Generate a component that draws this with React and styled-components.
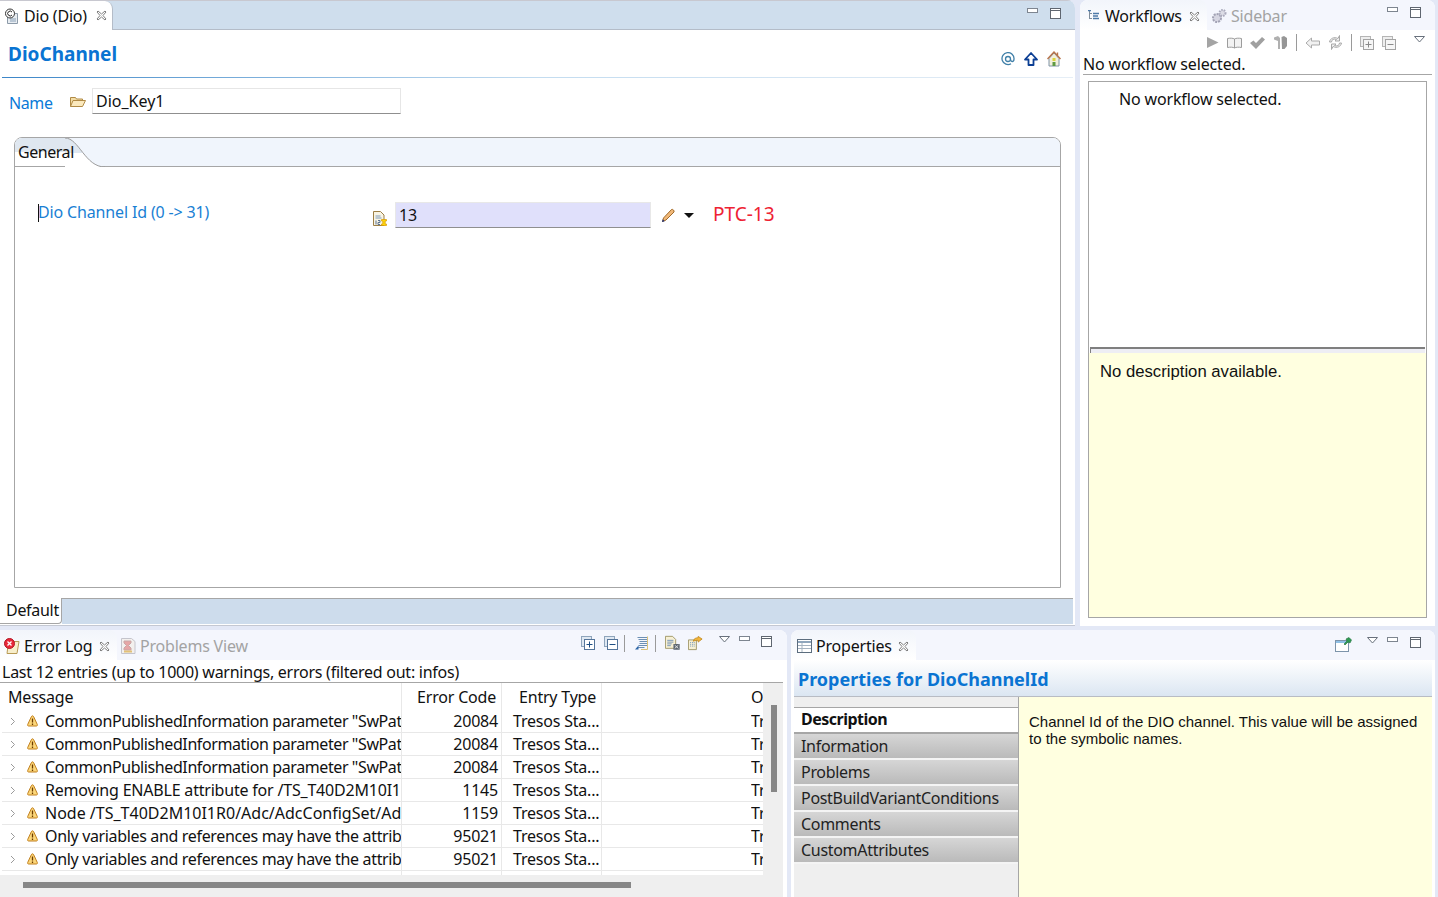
import styled, { createGlobalStyle } from 'styled-components';

const UI_FONT = '"Noto Sans", "Noto Sans CJK SC", sans-serif';

const GlobalStyle = createGlobalStyle`
  html, body {
    margin: 0;
    padding: 0;
    width: 1438px;
    height: 897px;
    overflow: hidden;
    background: #e3e8f6;
    font-family: ${UI_FONT};
    font-size: 16px;
    letter-spacing: -0.2px;
    color: #111;
  }
  * { box-sizing: border-box; }
`;

const rows = [
  { message: 'CommonPublishedInformation parameter "SwPat', code: '20084', tracking: -0.4 },
  { message: 'CommonPublishedInformation parameter "SwPat', code: '20084', tracking: -0.4 },
  { message: 'CommonPublishedInformation parameter "SwPat', code: '20084', tracking: -0.4 },
  { message: 'Removing ENABLE attribute for /TS_T40D2M10I1', code: '1145', tracking: -0.2 },
  { message: 'Node /TS_T40D2M10I1R0/Adc/AdcConfigSet/Ad', code: '1159', tracking: 0 },
  { message: 'Only variables and references may have the attrib', code: '95021', tracking: -0.34 },
  { message: 'Only variables and references may have the attrib', code: '95021', tracking: -0.34 },
];

const sections = ['Information', 'Problems', 'PostBuildVariantConditions', 'Comments', 'CustomAttributes'];

// ---------- icons ----------
const CloseIcon = () => (
  <Glyph width="11" height="11" viewBox="0 0 11 11">
    <path d="M1 2 2 1 5.5 4 9 1 10 2 7 5.5 10 9 9 10 5.5 7 2 10 1 9 4 5.5Z" fill="#fff" stroke="#7f7f7f" />
  </Glyph>
);

const MinIcon = () => (
  <Glyph width="11" height="6" viewBox="0 0 11 6">
    <rect x="0.5" y="0.5" width="10" height="4" fill="#fff" stroke="#7d8590" />
  </Glyph>
);

const MaxIcon = () => (
  <Glyph width="11" height="11" viewBox="0 0 11 11">
    <rect x="0.5" y="0.5" width="10" height="10" fill="#fff" stroke="#5f6670" />
    <path d="M1 2.5h9" stroke="#5f6670" />
  </Glyph>
);

const MenuIcon = () => (
  <Glyph width="11" height="7" viewBox="0 0 11 7">
    <path d="M.5.5h10L5.5 6Z" fill="#fff" stroke="#68707c" />
  </Glyph>
);

const ExpandIcon = ({ minus }) => (
  <Glyph width="14" height="14" viewBox="0 0 14 14">
    <rect x="0.5" y="0.5" width="10" height="10" fill="#dfe8f2" stroke="#8ea4bb" />
    <rect x="3.5" y="3.5" width="10" height="10" fill="#fff" stroke="#54749a" />
    <path d={minus ? 'M5.5 8.5h6' : 'M5.5 8.5h6M8.5 5.5v6'} stroke="#1f4f85" />
  </Glyph>
);

const GrayExpandIcon = ({ minus }) => (
  <Glyph width="14" height="14" viewBox="0 0 14 14">
    <rect x="0.5" y="0.5" width="10" height="10" fill="#eee" stroke="#b5b5b5" />
    <rect x="3.5" y="3.5" width="10" height="10" fill="#f6f6f6" stroke="#a3a3a3" />
    <path d={minus ? 'M5.5 8.5h6' : 'M5.5 8.5h6M8.5 5.5v6'} stroke="#8a8a8a" />
  </Glyph>
);

const EditorTabIcon = () => (
  <Glyph width="16" height="16" viewBox="0 0 16 16">
    <path d="M3.5 5.5h10v10h-10Z" fill="#e8edf2" stroke="#8c9aa8" />
    <path d="M6 11h6M6 13h6" stroke="#8aa0b6" />
    <circle cx="6" cy="5.5" r="4.5" fill="#fff" stroke="#333" />
    <path d="M8 4a2.4 2.4 0 1 0 0 3" fill="none" stroke="#222" />
  </Glyph>
);

const FolderIcon = () => (
  <Glyph width="16" height="13" viewBox="0 0 16 13">
    <path d="M.5 11.5V2.5h5l1 1.5h6v2" fill="#f3dda6" stroke="#b08a45" />
    <path d="M.5 11.5 3 5.5h12.500l-3 6Z" fill="#fbe9bd" stroke="#b08a45" />
  </Glyph>
);

const NumberDocIcon = () => (
  <Glyph width="14" height="15" viewBox="0 0 14 15">
    <path d="M.5.5h7l3.5 3.5v10.500H.5Z" fill="#f8f4e4" stroke="#9c7f46" />
    <path d="M2.5 5h5M2.5 7h6" stroke="#7e9bbb" />
    <path d="M3 9.5v4M5 9.5h2v2H5v2h2" fill="none" stroke="#5b7391" />
    <path d="M8.5 8.5h5v1.500h-1.300v3h1.300v1.500h-5V13h1.300v-3H8.500Z" fill="#ffd60a" stroke="#d89a00" strokeWidth="0.7" />
  </Glyph>
);

const PencilIcon = () => (
  <Glyph width="15" height="15" viewBox="0 0 15 15">
    <path d="M1.5 13.5 2.5 10 10.5 1.5c1-.8 3.2 1.2 2.5 2.5L5 12Z" fill="#f0b878" stroke="#a06a2b" />
    <path d="M1 14 1.8 11.3 3.7 13.2Z" fill="#1b2f7a" />
  </Glyph>
);

const AtIcon = () => (
  <Glyph width="14" height="14" viewBox="0 0 14 14">
    <path d="M10 11.8A6 6 0 1 1 13 7c0 1.5-.7 2.5-1.8 2.5S9.6 8.7 9.6 7.6" fill="none" stroke="#3f7fa8" strokeWidth="1.3" />
    <circle cx="7" cy="7" r="2.5" fill="none" stroke="#3f7fa8" strokeWidth="1.3" />
  </Glyph>
);

const UpIcon = () => (
  <Glyph width="14" height="14" viewBox="0 0 14 14">
    <path d="M7 1 13 7.5H9.5V13h-5V7.5H1Z" fill="#fff" stroke="#0c3f94" strokeWidth="1.8" strokeLinejoin="round" />
  </Glyph>
);

const HomeIcon = () => (
  <Glyph width="14" height="16" viewBox="0 0 14 16">
    <path d="M2 7.5 7 2l5 5.5V15H2Z" fill="#f2efdc" stroke="#8094a8" />
    <path d="M.5 8 7 1l6.5 7M10.5 1.5v3" fill="none" stroke="#b8744a" strokeWidth="1.4" />
    <rect x="5.5" y="7" width="3" height="3" fill="#dcd43c" />
    <rect x="5.5" y="11" width="3" height="4" fill="#5f9a42" />
  </Glyph>
);

const TreeIcon = () => (
  <Glyph width="12" height="12" viewBox="0 0 12 12">
    <path d="M1.5 1v8M1.5 3.5H4M1.5 8.5H4" stroke="#7e8d9c" />
    <path d="M0 .5h3M5 3.5h6M5 6h5M5 8.5h6" stroke="#4d7aa8" strokeWidth="1.5" />
  </Glyph>
);

const GearsIcon = () => (
  <Glyph width="16" height="15" viewBox="0 0 16 15">
    <circle cx="6" cy="9" r="4" fill="#d6d6e2" stroke="#a2a2b4" strokeWidth="2" strokeDasharray="2 1" />
    <circle cx="11.5" cy="4" r="3" fill="#dcdce6" stroke="#aaaabc" strokeWidth="2" strokeDasharray="1.5 1" />
  </Glyph>
);

const PlayIcon = () => (
  <Glyph width="13" height="13" viewBox="0 0 13 13">
    <path d="M1 1 12.5 6.5 1 12Z" fill="#a4a4a4" />
  </Glyph>
);

const BookIcon = () => (
  <Glyph width="15" height="12" viewBox="0 0 15 12">
    <path d="M7.5 2C6 1 3 1 .5 1.5v9C3 10 6 10 7.5 11c1.500-1 4.500-1 7-.5v-9C12 1 9 1 7.5 2ZM7.5 2v9" fill="#f2f2f2" stroke="#9c9c9c" />
  </Glyph>
);

const CheckIcon = () => (
  <Glyph width="15" height="12" viewBox="0 0 15 12">
    <path d="M0 6 3.5 3.5 6 6 12 0 15 2.5 6 12Z" fill="#a0a0a0" />
  </Glyph>
);

const ShirtIcon = () => (
  <Glyph width="15" height="15" viewBox="0 0 15 15">
    <path d="M1 2.5 5 1 7 3V14H5V6L1 4.5Z" fill="#b0b0b0" />
    <path d="M8.5 2 11 1l3 2v8l-2.5 3H9Z" fill="#969696" />
  </Glyph>
);

const BackIcon = () => (
  <Glyph width="15" height="12" viewBox="0 0 15 12">
    <path d="M6.5 1 1 6l5.5 5V8h8V4h-8Z" fill="#f1f1f1" stroke="#ababab" />
  </Glyph>
);

const SyncIcon = () => (
  <Glyph width="15" height="15" viewBox="0 0 15 15">
    <path d="M1.5 7C2 3.5 6 1.5 10 3.5L11.5.5V6H7l1.5-1.5C6 3.5 3.5 4.5 3.5 7ZM13.5 8c-.5 3.5-4.500 5.500-8.500 3.500L3.5 14.500V9H8L6.500 10.500c2.500 1 5 0 5-2.500Z" fill="#f2f2f2" stroke="#a8a8a8" />
  </Glyph>
);

const ErrorLogIcon = () => (
  <Glyph width="16" height="16" viewBox="0 0 16 16">
    <path d="M4.5 3.5h10.500l-2 12H3Z" fill="#f7eecb" stroke="#b89a55" />
    <circle cx="5.5" cy="5.5" r="5" fill="#e8283a" stroke="#b21724" />
    <path d="M3.5 3.5l4 4M7.5 3.5l-4 4" stroke="#fff" strokeWidth="1.3" />
  </Glyph>
);

const ProblemsIcon = () => (
  <Glyph width="15" height="16" viewBox="0 0 15 16">
    <path d="M.5.5h10l3.500 3v12H.5Z" fill="#f3f0ee" stroke="#c4c4cc" />
    <path d="M3 3h7v2l-2.500 2.500L10 10v2H3v-2l2.500-2.500L3 5Z" fill="#e6a6a6" stroke="#c9a6a6" />
    <path d="M3 13.5h8" stroke="#e2c178" strokeWidth="2" />
  </Glyph>
);

const ActivateIcon = () => (
  <Glyph width="15" height="15" viewBox="0 0 15 15">
    <path d="M3.5 1.5h10M4.5 3.5h9M5.5 5.5h8M5.5 7.5h8M4.5 9.5h9M3.5 11.5h7" stroke="#6c8fb4" />
    <path d="M1 13.5 4.5 9.5V13.5Z" fill="#2d66a8" />
    <path d="M13.5 .5v13H7" fill="none" stroke="#d9c077" />
  </Glyph>
);

const ClearLogIcon = () => (
  <Glyph width="16" height="16" viewBox="0 0 18 16">
    <path d="M.5.5h8l3.500 3.500v10H.5Z" fill="#f7f0d4" stroke="#9a9160" />
    <path d="M2.5 5h7M2.5 7h7M2.5 9h5M2.5 11h4" stroke="#6d8eb4" />
    <path d="M9.5 9h7v6.500h-7Z" fill="#5c6670" />
    <path d="M11 10.5l4 3.500M15 10.5l-4 3.500" stroke="#e8e8e8" />
  </Glyph>
);

const ExportLogIcon = () => (
  <Glyph width="15" height="16" viewBox="0 0 17 16">
    <path d="M.5 4.5h9v11h-9Z" fill="#f7f0d4" stroke="#9a9160" />
    <path d="M2.5 7.5h5M2.5 9.5h5M2.5 11.5h5" stroke="#5d86b4" strokeDasharray="1 1" />
    <path d="M6 6c.5-3 3-4 5.500-4V.5L16 3.500 11.500 7V5C9 5 7.500 5.200 6 6Z" fill="#f4b63a" stroke="#b97d10" strokeWidth="0.8" />
  </Glyph>
);

const WarnIcon = () => (
  <Glyph width="11" height="12" viewBox="0 0 11 12">
    <path d="M5.5 .8C6 .8 6.4 1.2 6.7 1.8L10.3 9.5C10.7 10.4 10.2 11 9.3 11H1.7C.8 11 .3 10.4.7 9.5L4.3 1.8C4.6 1.2 5 .8 5.5 .8Z" fill="#fcd77a" stroke="#c07f1e" />
    <path d="M5.5 3.5v4M5.5 8.5v1.500" stroke="#6b3b00" strokeWidth="1.3" />
  </Glyph>
);

const ChevronIcon = () => (
  <Glyph width="6" height="9" viewBox="0 0 6 9">
    <path d="M1 1l3.500 3.500L1 8" fill="none" stroke="#9a9a9a" />
  </Glyph>
);

const TableIcon = () => (
  <Glyph width="15" height="14" viewBox="0 0 15 14">
    <rect x="0.5" y="0.5" width="14" height="13" fill="#fff" stroke="#5c6d7e" />
    <path d="M1 3h13" stroke="#8fa6bc" strokeWidth="2" />
    <path d="M5 4v9M1 6.5h13M1 9.5h13" stroke="#a5b3c1" />
  </Glyph>
);

const PinIcon = () => (
  <Glyph width="17" height="15" viewBox="0 0 17 15">
    <rect x="0.5" y="3.5" width="13" height="11" fill="#fff" stroke="#7d94aa" />
    <path d="M1 5h12" stroke="#8fc0e6" strokeWidth="2" />
    <path d="M9 7 12 4l-1-2 3-1.500 2.500 2.500L15 6l-2-1-3 3Z" fill="#2f9b54" stroke="#1e6e3a" strokeWidth="0.6" />
  </Glyph>
);

// ---------- page ----------
const App = () => (
  <Page>
    <GlobalStyle />
    <TopRow>
      <EditorPanel>
        <EditorTabBar>
          <EditorTab>
            <EditorTabIcon />
            <TabTitle>Dio (Dio)</TabTitle>
            <CloseIcon />
          </EditorTab>
          <WindowButtons>
            <MinIcon />
            <MaxIcon />
          </WindowButtons>
        </EditorTabBar>
        <FormHeader>
          <FormTitle>DioChannel</FormTitle>
          <HeaderTools>
            <AtIcon />
            <UpIcon />
            <HomeIcon />
          </HeaderTools>
        </FormHeader>
        <NameRow>
          <NameLabel>Name</NameLabel>
          <FolderIcon />
          <NameField>Dio_Key1</NameField>
        </NameRow>
        <Folder>
          <FolderHead>
            <FolderTab>
              <TabCurve width="40" height="29" viewBox="0 0 40 29">
                <defs>
                  <linearGradient id="tabFill" x1="0" y1="0" x2="0" y2="1">
                    <stop offset="0.5" stopColor="#dfe7f0" />
                    <stop offset="0.5" stopColor="#fff" />
                  </linearGradient>
                </defs>
                <path d="M0 0C14 0 20 29 40 29H0Z" fill="url(#tabFill)" />
                <path d="M0 0C14 0 20 29 40 29" fill="none" stroke="#9c9c9c" />
              </TabCurve>
              <TabLabel>General</TabLabel>
            </FolderTab>
          </FolderHead>
          <FieldRow>
            <FieldLabel>
              <Caret />
              Dio Channel Id (0 -&gt; 31)
            </FieldLabel>
            <DocIconSlot>
              <NumberDocIcon />
            </DocIconSlot>
            <ValueField>13</ValueField>
            <PencilIcon />
            <DropArrow />
            <RedNote>PTC-13</RedNote>
          </FieldRow>
        </Folder>
        <BottomTabs>
          <DefaultTab>Default</DefaultTab>
          <BottomTabFill />
        </BottomTabs>
      </EditorPanel>

      <SidePanel>
        <ViewTabBar>
          <ViewTab $width={127} $left={8} $gap={5}>
            <TreeIcon />
            <TabTitle>Workflows</TabTitle>
            <CloseIcon />
          </ViewTab>
          <GrayTab>
            <GearsIcon />
            Sidebar
          </GrayTab>
          <WindowButtons>
            <MinIcon />
            <MaxIcon />
          </WindowButtons>
        </ViewTabBar>
        <WorkflowTools>
          <PlayIcon />
          <BookIcon />
          <CheckIcon />
          <ShirtIcon />
          <ToolSeparator />
          <BackIcon />
          <SyncIcon />
          <ToolSeparator />
          <GrayExpandIcon />
          <GrayExpandIcon minus />
          <ToolMenu>
            <MenuIcon />
          </ToolMenu>
        </WorkflowTools>
        <WorkflowStatus>No workflow selected.</WorkflowStatus>
        <WorkflowBox>
          <WorkflowList>No workflow selected.</WorkflowList>
          <Sash />
          <WorkflowHelp>No description available.</WorkflowHelp>
        </WorkflowBox>
      </SidePanel>
    </TopRow>

    <BottomRow>
      <LogPanel>
        <ViewTabBar>
          <ViewTab $width={117} $left={4} $gap={4}>
            <ErrorLogIcon />
            <TabTitle>Error Log</TabTitle>
            <CloseIcon />
          </ViewTab>
          <GrayTab>
            <ProblemsIcon />
            Problems View
          </GrayTab>
          <LogTools>
            <ExpandIcon />
            <ExpandIcon minus />
            <LogSeparator />
            <ActivateIcon />
            <LogSeparator />
            <IconPair>
              <ClearLogIcon />
              <ExportLogIcon />
            </IconPair>
            <LogWindowButtons>
              <MenuIcon />
              <MinIcon />
              <MaxIcon />
            </LogWindowButtons>
          </LogTools>
        </ViewTabBar>
        <LogStatus>Last 12 entries (up to 1000) warnings, errors (filtered out: infos)</LogStatus>
        <TableArea>
          <TableClip>
            <TableHead>
              <MessageCell>Message</MessageCell>
              <CodeHeadCell>Error Code</CodeHeadCell>
              <TypeHeadCell>Entry Type</TypeHeadCell>
              <GapCell />
              <OriginCell>O</OriginCell>
            </TableHead>
            {rows.map((row, index) => (
              <TableRow key={index}>
                <MessageCell>
                  <RowLead>
                    <ChevronIcon />
                    <WarnIcon />
                  </RowLead>
                  <MessageText $tracking={row.tracking}>{row.message}</MessageText>
                </MessageCell>
                <CodeCell>{row.code}</CodeCell>
                <TypeCell>Tresos Sta...</TypeCell>
                <GapCell />
                <OriginCell>Tr</OriginCell>
              </TableRow>
            ))}
            <LastRow>
              <MessageCell />
              <CodeCell />
              <TypeCell />
            </LastRow>
          </TableClip>
          <VerticalTrack>
            <VerticalThumb />
          </VerticalTrack>
        </TableArea>
        <HorizontalTrack>
          <HorizontalThumb />
        </HorizontalTrack>
      </LogPanel>

      <PropertiesPanel>
        <ViewTabBar>
          <ViewTab $width={125} $left={6} $gap={4}>
            <TableIcon />
            <TabTitle>Properties</TabTitle>
            <CloseIcon />
          </ViewTab>
          <PropsTools>
            <PinIcon />
            <PropsWindowButtons>
              <MenuIcon />
              <MinIcon />
              <MaxIcon />
            </PropsWindowButtons>
          </PropsTools>
        </ViewTabBar>
        <PropsHeader>Properties for DioChannelId</PropsHeader>
        <PropsBody>
          <SectionList>
            <SectionStrip />
            <ActiveSection>Description</ActiveSection>
            {sections.map((name) => (
              <Section key={name}>{name}</Section>
            ))}
          </SectionList>
          <Description>
            Channel Id of the DIO channel. This value will be assigned to the symbolic names.
          </Description>
        </PropsBody>
      </PropertiesPanel>
    </BottomRow>
  </Page>
);

export default App;

// ---------- styles ----------
const Glyph = styled.svg`
  flex: none;
  display: block;
`;

const Page = styled.div`
  width: 1438px;
  height: 897px;
  display: flex;
  flex-direction: column;
  gap: 4px;
  overflow: hidden;
`;

const TopRow = styled.div`
  display: flex;
  gap: 5px;
  height: 626px;
  padding-right: 3px;
`;

const BottomRow = styled.div`
  display: flex;
  gap: 4px;
  height: 267px;
  padding-right: 3px;
`;

const EditorPanel = styled.section`
  width: 1075px;
  display: flex;
  flex-direction: column;
  background: #fff;
  border-radius: 0 8px 0 0;
  border-bottom: 1px solid #c4c8d2;
  overflow: hidden;
`;

const EditorTabBar = styled.div`
  height: 30px;
  display: flex;
  align-items: stretch;
  background: #cfdeed;
  border-top: 1px solid #c8c8d0;
  border-bottom: 1px solid #b4bcc8;
`;

const EditorTab = styled.div`
  width: 113px;
  margin-bottom: -1px;
  display: flex;
  align-items: center;
  padding: 0 5px 0 4px;
  gap: 4px;
  background: #fff;
  border-right: 1px solid #b4bcc8;
  border-radius: 0 8px 0 0;
`;

const TabTitle = styled.span`
  flex: 1;
  white-space: nowrap;
  line-height: 22px;
`;

const WindowButtons = styled.div`
  margin-left: auto;
  display: flex;
  align-items: flex-start;
  gap: 12px;
  padding: 7px 14px 0 0;
`;

const FormHeader = styled.header`
  height: 48px;
  margin: 0 2px;
  padding: 0 6px;
  display: flex;
  align-items: center;
  justify-content: space-between;
  border-bottom: 1px solid transparent;
  border-image: linear-gradient(90deg, #3c86c8, #c3dcf0 50%, #e6eef6) 1;
`;

const FormTitle = styled.h1`
  margin: 0;
  font-size: 19px;
  line-height: 28px;
  font-weight: 700;
  letter-spacing: 0;
  color: #0a74d2;
`;

const HeaderTools = styled.div`
  display: flex;
  align-items: center;
  gap: 9px;
  padding: 10px 0 0;
  margin-right: 6px;
`;

const NameRow = styled.div`
  height: 26px;
  margin-top: 10px;
  padding-left: 8px;
  display: flex;
  align-items: center;
`;

const NameLabel = styled.span`
  width: 62px;
  color: #0a7ad8;
  padding: 3px 0 0 1px;
  letter-spacing: -0.4px;
`;

const NameField = styled.div`
  width: 309px;
  height: 26px;
  margin-left: 6px;
  padding: 0 3px;
  line-height: 25px;
  letter-spacing: 0;
  border: 1px solid #e6e6e6;
  border-bottom: 1px solid #8f8f8f;
`;

const Folder = styled.div`
  width: 1047px;
  height: 451px;
  margin: 23px 0 0 14px;
  border: 1px solid #a6a6a6;
  border-radius: 8px 8px 0 0;
  overflow: hidden;
  flex: none;
`;

const FolderHead = styled.div`
  height: 29px;
  background: #f0f5fc;
  border-bottom: 1px solid #a6a6a6;
`;

const FolderTab = styled.div`
  position: relative;
  width: 50px;
  height: 28px;
  padding-left: 3px;
  line-height: 28px;
  white-space: nowrap;
  background: linear-gradient(#dfe7f0 50%, #fff 50%);
`;

const TabLabel = styled.span`
  position: relative;
  letter-spacing: -0.45px;
`;

const TabCurve = styled.svg`
  position: absolute;
  left: 50px;
  top: 0;
`;

const FieldRow = styled.div`
  display: flex;
  align-items: center;
  height: 26px;
  margin-top: 35px;
  padding-left: 23px;
`;

const FieldLabel = styled.div`
  position: relative;
  width: 335px;
  color: #1a7fd4;
  letter-spacing: -0.15px;
  margin-top: -6px;
`;

const Caret = styled.span`
  position: absolute;
  left: 0;
  top: 3px;
  width: 1px;
  height: 18px;
  background: #111;
`;

const DocIconSlot = styled.span`
  padding-top: 6px;
`;

const ValueField = styled.div`
  width: 256px;
  height: 26px;
  margin: 0 10px 0 8px;
  padding: 0 3px;
  line-height: 25px;
  background: #e0e0fb;
  border: 1px solid #e8e8e8;
  border-bottom: 1px solid #8f8f8f;
`;

const DropArrow = styled.span`
  width: 0;
  height: 0;
  margin-left: 8px;
  border: 5px solid transparent;
  border-top-color: #111;
  border-bottom: 0;
`;

const RedNote = styled.span`
  margin-left: 19px;
  font-size: 19px;
  letter-spacing: 0;
  color: #ee2233;
  margin-top: -2px;
`;

const BottomTabs = styled.div`
  height: 26px;
  margin-top: 10px;
  display: flex;
`;

const DefaultTab = styled.div`
  width: 62px;
  padding-left: 6px;
  line-height: 25px;
  letter-spacing: -0.3px;
  background: #fff;
  border-right: 1px solid #a6a6a6;
  border-bottom: 1px solid #a6a6a6;
  border-radius: 0 0 4px 0;
`;

const BottomTabFill = styled.div`
  flex: 1;
  margin-right: 2px;
  background: #cddcec;
  border-top: 1px solid #a6a6a6;
`;

const SidePanel = styled.section`
  width: 355px;
  display: flex;
  flex-direction: column;
  background: #fff;
  border-radius: 8px 8px 0 0;
  overflow: hidden;
`;

const ViewTabBar = styled.div`
  height: 30px;
  display: flex;
  flex: none;
  background: #f4f6fd;
`;

const ViewTab = styled.div`
  width: ${(props) => props.$width}px;
  flex: none;
  display: flex;
  align-items: center;
  gap: ${(props) => props.$gap}px;
  padding: 2px 7px 0 ${(props) => props.$left}px;
  background: linear-gradient(#f2f5fb, #fff);
  border-radius: 8px 8px 0 0;
`;

const GrayTab = styled.div`
  display: flex;
  align-items: center;
  gap: 4px;
  padding: 2px 0 0 4px;
  color: #a3a3a3;
  white-space: nowrap;
`;

const WorkflowTools = styled.div`
  height: 25px;
  flex: none;
  display: flex;
  align-items: center;
  justify-content: flex-end;
  gap: 8px;
  padding: 0 10px 0 0;
`;

const ToolSeparator = styled.span`
  width: 1px;
  height: 17px;
  background: #9a9a9a;
`;

const LogSeparator = styled(ToolSeparator)`
  margin-left: -3px;
`;

const ToolMenu = styled.span`
  margin: 0 0 6px 10px;
`;

const WorkflowStatus = styled.div`
  height: 20px;
  flex: none;
  margin: 0 3px;
  line-height: 18px;
  letter-spacing: -0.15px;
  border-bottom: 1px solid #a6a6a6;
`;

const WorkflowBox = styled.div`
  flex: 1;
  margin: 6px 8px 8px 8px;
  display: flex;
  flex-direction: column;
  border: 1px solid #a6a6a6;
`;

const WorkflowList = styled.div`
  height: 265px;
  padding: 5px 0 0 30px;
  line-height: 24px;
  letter-spacing: -0.15px;
`;

const Sash = styled.div`
  height: 6px;
  margin: 0 1px;
  border-top: 2px solid #7f7f7f;
  border-left: 1px solid #7f7f7f;
  background: #eeeef4;
`;

const WorkflowHelp = styled.div`
  flex: 1;
  padding: 9px 11px;
  background: #ffffe0;
  font-family: "Liberation Sans", Arial, sans-serif;
  font-size: 16.7px;
  letter-spacing: 0;
  line-height: 20px;
`;

const LogPanel = styled.section`
  width: 787px;
  display: flex;
  flex-direction: column;
  background: #fff;
  border-radius: 0 8px 0 0;
  overflow: hidden;
`;

const LogTools = styled.div`
  margin-left: auto;
  display: flex;
  align-items: center;
  gap: 9px;
  padding-bottom: 2px;
  height: 28px;
`;

const IconPair = styled.div`
  display: flex;
  gap: 7px;
`;

const LogWindowButtons = styled.div`
  display: flex;
  align-items: flex-start;
  gap: 9px;
  margin: 0 15px 4px 7px;
  & > svg:last-child {
    margin-left: 2px;
  }
`;

const LogStatus = styled.div`
  height: 23px;
  flex: none;
  padding-left: 2px;
  line-height: 24px;
  letter-spacing: -0.25px;
  white-space: nowrap;
  border-bottom: 1px solid #a6a6a6;
  margin-right: 4px;
`;

const TableArea = styled.div`
  flex: 1;
  display: flex;
  min-height: 0;
`;

const TableClip = styled.div`
  width: 763px;
  overflow: hidden;
  padding-left: 2px;
`;

const TableHead = styled.div`
  height: 27px;
  display: flex;
  align-items: stretch;
  line-height: 28px;
`;

const TableRow = styled.div`
  height: 23px;
  display: flex;
  align-items: stretch;
  line-height: 22px;
  border-bottom: 1px solid #e8e8e8;
`;

const LastRow = styled(TableRow)`
  border-bottom: 0;
`;

const MessageCell = styled.div`
  width: 400px;
  flex: none;
  display: flex;
  align-items: center;
  padding-left: 6px;
  overflow: hidden;
  white-space: nowrap;
  border-right: 1px solid #e8e8e8;
`;

const RowLead = styled.div`
  width: 37px;
  flex: none;
  display: flex;
  align-items: center;
  justify-content: space-between;
  padding: 0 7px 0 2px;
`;

const MessageText = styled.span`
  letter-spacing: ${(props) => props.$tracking}px;
`;

const CodeCell = styled.div`
  width: 100px;
  flex: none;
  text-align: right;
  padding-right: 3px;
  white-space: nowrap;
  border-right: 1px solid #e8e8e8;
`;

const CodeHeadCell = styled(CodeCell)`
  padding-right: 5px;
`;

const TypeCell = styled.div`
  width: 100px;
  flex: none;
  padding-left: 11px;
  white-space: nowrap;
  overflow: hidden;
  border-right: 1px solid #e8e8e8;
`;

const TypeHeadCell = styled(TypeCell)`
  padding-left: 17px;
`;

const GapCell = styled.div`
  width: 149px;
  flex: none;
`;

const OriginCell = styled.div`
  flex: 1;
  overflow: hidden;
  white-space: nowrap;
`;

const VerticalTrack = styled.div`
  width: 20px;
  background: #efefef;
  padding: 22px 6px 0 8px;
`;

const VerticalThumb = styled.div`
  height: 87px;
  background: #878787;
`;

const HorizontalTrack = styled.div`
  height: 22px;
  flex: none;
  background: #efefef;
  padding: 7px 0 0 23px;
  margin-right: 4px;
`;

const HorizontalThumb = styled.div`
  width: 608px;
  height: 6px;
  background: #878787;
`;

const PropertiesPanel = styled.section`
  width: 644px;
  display: flex;
  flex-direction: column;
  background: #fff;
  border-radius: 8px 8px 0 0;
  overflow: hidden;
`;

const PropsTools = styled.div`
  margin-left: auto;
  display: flex;
  align-items: center;
  gap: 15px;
  height: 28px;
`;

const PropsWindowButtons = styled.div`
  display: flex;
  align-items: flex-start;
  gap: 9px;
  margin: 0 14px 4px 0;
  & > svg:last-child {
    margin-left: 3px;
  }
`;

const PropsHeader = styled.h2`
  flex: none;
  height: 37px;
  margin: 0 3px;
  padding: 0 4px;
  font-size: 18px;
  line-height: 39px;
  font-weight: 700;
  letter-spacing: 0;
  color: #0a74d2;
  white-space: nowrap;
  background: linear-gradient(#fff, #dbe6f2);
  border-bottom: 1px solid #b8bcc4;
`;

const PropsBody = styled.div`
  flex: 1;
  display: flex;
  margin: 0 3px;
  min-height: 0;
`;

const SectionList = styled.div`
  width: 225px;
  flex: none;
  background: #efefef;
  border-right: 1px solid #a6a6a6;
`;

const SectionStrip = styled.div`
  height: 11px;
  border-bottom: 1px solid #a6a6a6;
`;

const ActiveSection = styled.div`
  height: 26px;
  padding-left: 7px;
  line-height: 23px;
  font-weight: 700;
  letter-spacing: -0.5px;
  background: #fff;
  border-bottom: 2px solid #a6a6a6;
`;

const Section = styled.div`
  height: 26px;
  padding-left: 7px;
  line-height: 25px;
  letter-spacing: -0.3px;
  color: #222;
  background: linear-gradient(#d6d6d6, #bababa);
  border-bottom: 2px solid #f4f4f4;
`;

const Description = styled.div`
  flex: 1;
  padding: 16px 10px;
  background: #ffffe0;
  font-family: "Liberation Sans", Arial, sans-serif;
  font-size: 15px;
  letter-spacing: 0;
  line-height: 17px;
`;
